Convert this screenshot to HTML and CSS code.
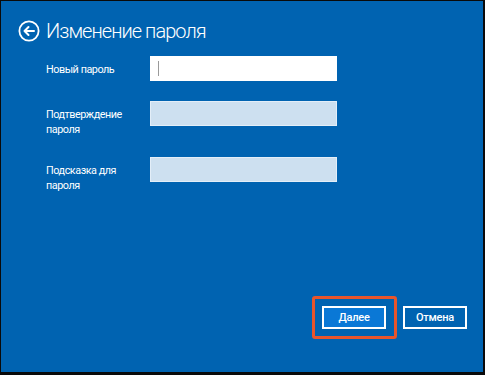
FILE: index.html
```html
<!DOCTYPE html>
<html lang="ru">
<head>
<meta charset="utf-8">
<link rel="stylesheet" href="styles.css">
</head>
<body>
<div class="frame">
  <div class="screen">
    <header class="title-row">
      <svg class="back" width="22" height="22" viewBox="0 0 22 22">
        <circle cx="11" cy="11" r="9.6" fill="none" stroke="#fff" stroke-width="1.8"/>
        <path d="M16 11H6.5M10.5 7 6.5 11 10.5 15" fill="none" stroke="#fff" stroke-width="2" stroke-linecap="round" stroke-linejoin="round"/>
      </svg>
      <h1 class="title">Изменение пароля</h1>
    </header>
    <div class="form">
      <div class="label">Новый пароль</div>
      <div class="field field-active"><span class="caret"></span></div>
      <div class="label">Подтверждение<br>пароля</div>
      <div class="field"></div>
      <div class="label">Подсказка для<br>пароля</div>
      <div class="field"></div>
    </div>
    <div class="actions">
      <div class="highlight"><button class="btn btn-primary">Далее</button></div>
      <button class="btn">Отмена</button>
    </div>
  </div>
</div>
</body>
</html>
```
FILE: styles.css
```css
html, body {
  margin: 0;
  padding: 0;
  width: 485px;
  height: 375px;
  overflow: hidden;
  background: #000;
}
.frame {
  box-sizing: border-box;
  width: 485px;
  height: 375px;
  padding: 1px 2px 3px 1px;
  background: #0a0a0a;
}
.screen {
  width: 100%;
  height: 100%;
  background: #0063b1;
  color: #fff;
  font-family: Roboto, "Noto Sans", sans-serif;
  display: flex;
  flex-direction: column;
  position: relative;
}
.title-row {
  display: flex;
  align-items: center;
  padding: 18px 0 0 17px;
  height: 24px;
}
.back {
  display: block;
  margin-right: 6px;
}
.title {
  margin: 0;
  font-weight: 300;
  font-size: 20px;
  line-height: 24px;
  letter-spacing: -0.95px;
}
.form {
  display: grid;
  grid-template-columns: 104px 187px;
  row-gap: 20px;
  margin: 13px 0 0 45px;
  align-items: start;
}
.label {
  font-size: 10.8px;
  line-height: 15px;
  padding-top: 6px;
  letter-spacing: -0.45px;
}
.field {
  box-sizing: border-box;
  height: 25px;
  background: #cde0f0;
  border: 1px solid #e3eef8;
  position: relative;
}
.field-active {
  background: #fff;
  border-color: #fff;
}
.caret {
  position: absolute;
  left: 7px;
  top: 4px;
  width: 1px;
  height: 15px;
  background: #9a9a9a;
}
.actions {
  margin-top: auto;
  display: flex;
  justify-content: flex-end;
  align-items: center;
  gap: 6px;
  padding: 0 16px 33px 0;
}
.highlight {
  border: 3px solid #e8552c;
  border-radius: 3px;
  padding: 7px 8px 7px 7px;
}
.btn {
  box-sizing: border-box;
  width: 64px;
  height: 23px;
  border: 2px solid #fff;
  background: transparent;
  color: #fff;
  font-family: Roboto, "Noto Sans", sans-serif;
  font-size: 11px;
  font-weight: 500;
  letter-spacing: -0.2px;
  padding: 0;
  display: block;
}
.btn-primary {
  background: #0a78d6;
}
```
